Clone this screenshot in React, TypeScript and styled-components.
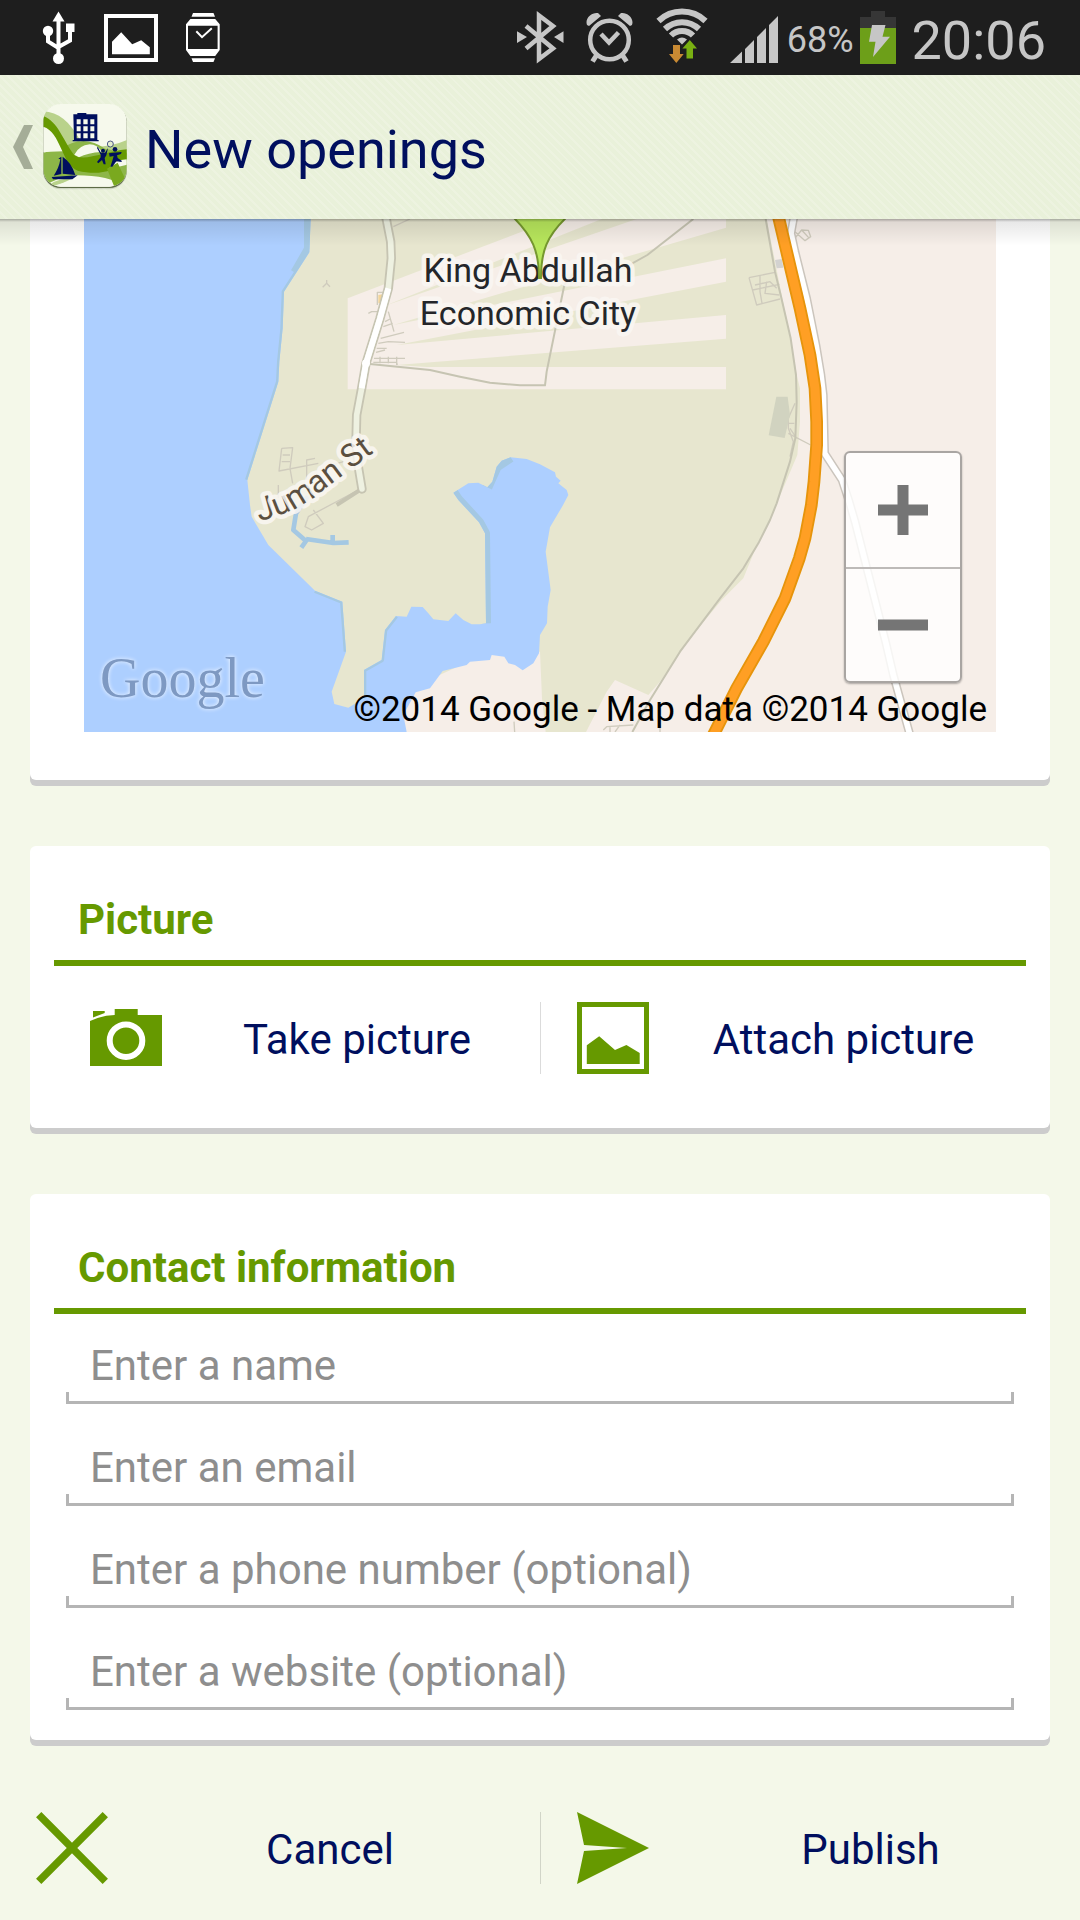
import React from "react";
import styled, { createGlobalStyle } from "styled-components";

const green = "#669900";
const navy = "#000f5e";
const paper = "#f4f8e9";
const statusGrey = "#c6c6c6";

const GlobalStyle = createGlobalStyle`
  *, *::before, *::after { box-sizing: border-box; }
  body {
    margin: 0;
    background: ${paper};
    font-family: Roboto, "Noto Sans", sans-serif;
    color: ${navy};
  }
  button, input { font: inherit; color: inherit; }
  svg { display: block; flex: none; }
`;

const Screen = styled.div`
  display: flex;
  flex-direction: column;
  min-height: 100vh;
`;

const StatusBar = styled.div`
  display: flex;
  justify-content: space-between;
  height: 75px;
  padding: 0 34px 0 42px;
  background: #1e1e1e;
  color: ${statusGrey};
`;

const StatusGroup = styled.div<{ $gap: number }>`
  display: flex;
  align-items: center;
  gap: ${(p) => p.$gap}px;
`;

const Percent = styled.span`
  padding: 4px 0 0 3px;
  font-size: 36px;
  line-height: 42px;
`;

const Clock = styled.time`
  padding: 6px 0 0 10px;
  font-size: 54px;
  line-height: 64px;
`;

const AppBar = styled.header`
  position: relative;
  z-index: 1;
  display: flex;
  align-items: center;
  height: 144px;
  padding: 0 12px;
  background: repeating-linear-gradient(45deg, #e9f1da 0 4px, #edf3e0 4px 6px);

  &::after {
    content: "";
    position: absolute;
    top: 100%;
    left: 0;
    right: 0;
    height: 27px;
    background: linear-gradient(rgba(0, 0, 0, 0.32), rgba(0, 0, 0, 0.09) 3px, rgba(0, 0, 0, 0));
    pointer-events: none;
  }
`;

const UpLink = styled.a`
  display: flex;
  align-items: center;
  gap: 8px;
`;

const PageTitle = styled.h1`
  margin: 0 0 0 17px;
  padding-top: 6px;
  font-size: 54px;
  font-weight: 400;
  line-height: 64px;
`;

const Form = styled.form`
  display: flex;
  flex-direction: column;
`;

const Card = styled.section`
  margin: 0 30px 66px;
  background: #fff;
  border-radius: 6px;
  box-shadow: 0 6px 0 #ccc;
`;

const MapCard = styled(Card)`
  padding: 0 54px 48px;
  border-radius: 0 0 6px 6px;
`;

const MapFrame = styled.div`
  position: relative;
  height: 513px;
  overflow: hidden;
`;

const MapCredit = styled.p`
  position: absolute;
  right: 9px;
  bottom: 0;
  margin: 0;
  color: #000;
  font-size: 35px;
  line-height: 44px;
  white-space: nowrap;
`;

const ZoomControls = styled.div`
  position: absolute;
  right: 34px;
  bottom: 49px;
  display: flex;
  flex-direction: column;
  width: 118px;
  background: rgba(255, 255, 255, 0.82);
  border: 2px solid #a9a5a2;
  border-radius: 6px;
  box-shadow: 0 1px 2px rgba(0, 0, 0, 0.3);
`;

const ZoomButton = styled.button`
  display: flex;
  align-items: center;
  justify-content: center;
  height: 114px;
  padding: 0;
  border: 0;
  background: none;

  & + & {
    border-top: 2px solid #bdbab8;
  }
`;

const CardTitle = styled.h2`
  margin: 0 24px;
  padding: 49px 24px 15px;
  border-bottom: 6px solid ${green};
  color: ${green};
  font-size: 42px;
  font-weight: 700;
  line-height: 50px;
`;

const ActionRow = styled.div`
  display: grid;
  grid-template-columns: 1fr 1fr;
`;

const CardActions = styled(ActionRow)`
  padding: 36px 24px 54px;
`;

const FooterActions = styled(ActionRow)`
  padding: 6px 0 36px;
`;

const Action = styled.button`
  display: flex;
  align-items: center;
  gap: 12px;
  height: 72px;
  padding: 0 0 0 36px;
  border: 0;
  background: none;

  & + & {
    border-left: 1px solid rgba(0, 0, 0, 0.14);
  }
`;

const ActionLabel = styled.span`
  flex: 1;
  padding-top: 4px;
  font-size: 42px;
  line-height: 50px;
  text-align: center;
`;

const Fields = styled.div`
  display: flex;
  flex-direction: column;
  gap: 12px;
  padding: 0 36px 30px;
`;

const Field = styled.input`
  width: 100%;
  height: 90px;
  padding: 12px 24px 0;
  border: 0;
  border-radius: 0;
  outline: 0;
  font-size: 42px;
  line-height: 50px;
  background:
    linear-gradient(#b5b5b5, #b5b5b5) left bottom / 3px 12px no-repeat,
    linear-gradient(#b5b5b5, #b5b5b5) right bottom / 3px 12px no-repeat,
    linear-gradient(#b5b5b5, #b5b5b5) left bottom / 100% 3px no-repeat;

  &::placeholder {
    color: #8e8e8e;
    opacity: 1;
  }
`;

const MapLabel = styled.text`
  fill: #24262a;
  stroke: rgba(250, 247, 243, 0.85);
  stroke-width: 9px;
  stroke-linejoin: round;
  paint-order: stroke;
  font-size: 34px;
  text-anchor: middle;
`;

const StreetLabel = styled(MapLabel)`
  fill: #5b4f40;
  font-size: 32px;
  text-anchor: start;
`;

const MapLogo = styled.text`
  fill: #7e99c2;
  font-family: "Liberation Serif", serif;
  font-size: 56px;
  filter: drop-shadow(0 0 2px rgba(255, 255, 255, 0.9));
`;

function UsbIcon() {
  return (
    <svg width="34" height="75" viewBox="42 0 34 75" fill="none" stroke="#fff" strokeWidth="4">
      <path d="M58.5 20V58M48 31V41.500L58.500 48M70 31V40.500L58.500 47" />
      <path d="M58.500 11.500L64.500 21.500H52.500Z" fill="#fff" stroke="none" />
      <circle cx="48" cy="31" r="5.200" fill="#fff" stroke="none" />
      <circle cx="58.500" cy="58.500" r="5.500" fill="#fff" stroke="none" />
      <path d="M66 23.500h8.500v8.500H66Z" fill="#fff" stroke="none" />
    </svg>
  );
}

function PhotoStatusIcon() {
  return (
    <svg width="54" height="75" viewBox="104 0 54 75" fill="#fff">
      <path d="M104 14h54v48h-54ZM108 18v40h46V18Z" fillRule="evenodd" />
      <path d="M112 41.700L121.200 32.300L132.200 44.300L141.200 40.300L149.800 47.300V54.300H112Z" />
    </svg>
  );
}

function WatchIcon() {
  return (
    <svg width="34" height="75" viewBox="186 0 34 75" fill="#fff">
      <path d="M193 13h20.500l1.500 3.700h-23.500Z" />
      <path
        fillRule="evenodd"
        d="M190.400 19H215.200L219.700 24.300V50L215.200 56H190.400L186 50V24.300ZM188 25.700V49H217.600V25.700Z"
      />
      <path d="M191.500 58.300h23.500l-1.500 3.700h-20.500Z" />
      <path d="M196.300 31.300L202 37.200L211.800 28.300" fill="none" stroke="#fff" strokeWidth="2" />
    </svg>
  );
}

function BluetoothIcon() {
  return (
    <svg width="47" height="75" viewBox="516 0 47 75" fill={statusGrey}>
      <path
        d="M525 26L552 48.500L538 59V15.500L552 26L525 48.500"
        fill="none"
        stroke={statusGrey}
        strokeWidth="4.500"
      />
      <path d="M516 31.300V43L526 37ZM562.500 31.300V43L553 37Z" />
    </svg>
  );
}

function AlarmIcon() {
  return (
    <svg width="48" height="75" viewBox="588 0 48 75" fill="none" stroke={statusGrey}>
      <circle cx="611.500" cy="40" r="19.300" strokeWidth="4.500" />
      <path d="M603 34L611 42.500L620.500 32.500" strokeWidth="4.500" />
      <path d="M599 54.500L594.500 61.500M624 54.500L628.500 61.500" strokeWidth="5" />
      <path
        d="M589 25C586.500 18 594 12 600 13L603 16L591 26ZM634 25C636.500 18 629 12 623 13L620 16L632 26Z"
        fill={statusGrey}
        stroke="none"
      />
    </svg>
  );
}

function WifiIcon() {
  return (
    <svg width="52" height="75" viewBox="656 0 52 75" fill="none" stroke={statusGrey} strokeWidth="6">
      <path d="M658.500 21A34 34 0 0 1 705.500 21" />
      <path d="M665 29A24.500 24.500 0 0 1 699 29" />
      <path d="M671 35.500A15.500 15.500 0 0 1 693 35.500" />
      <path d="M677 39.500Q682 35.500 687 39.500L682 44.500Z" fill={statusGrey} stroke="none" />
      <path d="M673 45h7v9h3.700L676.300 63L669 54h4Z" fill="#c98a33" stroke="none" />
      <path d="M686.500 58.500V48.500H682.400L689.800 40L697 48.500H693V58.500Z" fill="#79b012" stroke="none" />
    </svg>
  );
}

function SignalIcon() {
  return (
    <svg width="48" height="75" viewBox="730 0 48 75" fill={statusGrey}>
      <path d="M730 63L742 51.500V63ZM745 63V49L754 40V63ZM757 63V37L766 28V63ZM769 63V25L778 16V63Z" />
    </svg>
  );
}

function BatteryIcon() {
  return (
    <svg width="36" height="75" viewBox="860 0 36 75">
      <path d="M871 11h14v6h11v12h-36V17h11Z" fill="#363636" />
      <path d="M860 28h36v36h-36Z" fill="#6d9f19" />
      <path
        d="M872 25H885.500L882.500 36.700H890L873 57L875.500 41.700H869Z"
        fill={statusGrey}
      />
    </svg>
  );
}

function AppIcon() {
  return (
    <svg width="86" height="90" viewBox="101 8 258 270">
      <defs>
        <clipPath id="tile">
          <rect x="105" y="14" width="250" height="248" rx="52" />
        </clipPath>
      </defs>
      <rect x="104" y="18" width="252" height="252" rx="54" fill="#000" opacity="0.12" />
      <rect x="105" y="16" width="250" height="250" rx="52" fill="#5d6b46" />
      <g clipPath="url(#tile)">
        <path d="M105 14H356V264H105Z" fill="#f6f9ec" />
        <path d="M105 36C150 38 185 68 215 122L200 172C165 125 150 88 105 62Z" fill="#b9d28b" />
        <path d="M262 142Q310 142 356 122V175L268 168Z" fill="#b9d28b" />
        <path
          d="M105 160Q150 152 190 132Q240 112 290 148L356 160V262Q300 228 205 228Q150 232 105 262Z"
          fill="#8db648"
        />
        <path d="M105 84C138 88 158 118 166 156L105 158Z" fill="#f6f9ec" />
        <path
          d="M105 50C150 68 162 120 198 168C230 188 290 156 356 150V182C310 224 260 226 208 214C160 196 158 98 105 82Z"
          fill={green}
        />
        <path d="M198 166Q212 138 244 135Q268 136 280 158Q238 160 212 174Z" fill="#f6f9ec" />
        <path d="M320 188Q338 180 356 180V196L300 210Z" fill="#f6f9ec" />
        <path d="M296 208L328 190Q344 226 352 240L318 262Z" fill="#7aa91f" />
        <path d="M124 256Q150 236 196 236L130 266Z" fill="#b9d28b" />
        <path d="M128 262Q210 232 300 250L316 268H128Z" fill="#f6f9ec" />
      </g>
      <g fill={navy}>
        <path
          fillRule="evenodd"
          d="M195 45H207V41H234V45H267V122H271V126H193V122H197ZM205 60V75H217V60ZM225 60V75H238V60ZM246 60V75H258V60ZM205 81V96H217V81ZM225 81V96H238V81ZM246 81V96H258V81ZM205 102V117H217V102ZM225 102V117H238V102ZM246 102V117H258V102Z"
        />
        <path d="M159 172V224L136 229Q152 206 156 180L150 178ZM163 172Q190 190 201 227L163 223Z" />
        <path d="M130 233L208 228L192 240H134Z" />
        <circle cx="284" cy="154" r="6" />
        <path d="M268 142L278 160H290L299 146L294 168L289 176L292 195H286L281 182L270 192L266 188L277 174V166L266 146Z" />
        <circle cx="320" cy="150" r="7" />
        <path d="M302 162L314 160L340 158L338 164L326 168L328 176L340 184V188L324 186L312 202H306L312 184L316 170L304 172Z" />
      </g>
      <circle cx="306" cy="134" r="9" fill="#e4edcf" stroke={navy} strokeWidth="2" />
    </svg>
  );
}

function ChevronIcon() {
  return (
    <svg width="22" height="44" viewBox="0 0 22 44">
      <path d="M12 0H21L11 22L21 44H12L1 22Z" fill="#a5ad98" />
    </svg>
  );
}

function CameraIcon() {
  return (
    <svg width="72" height="72" viewBox="90 1002 72 72" fill={green}>
      <path d="M90 1021Q103 1015 114.700 1015V1009H137.700V1015H162V1066H90Z" />
      <path d="M93 1011H104.700V1013L93 1017.500Z" />
      <circle cx="126" cy="1040.700" r="16.300" stroke="#fff" strokeWidth="6" />
    </svg>
  );
}

function PictureIcon() {
  return (
    <svg width="72" height="72" viewBox="577 1002 72 72" fill={green}>
      <path d="M577 1002h72v72h-72ZM582 1007v62h62v-62Z" fillRule="evenodd" />
      <path d="M586.800 1045.300L599.200 1036.300L615 1050L626.400 1045L639.700 1053V1064H586.800Z" />
    </svg>
  );
}

function CrossIcon() {
  return (
    <svg width="72" height="72" viewBox="0 0 72 72" stroke={green} strokeWidth="7.500">
      <path d="M2.700 2.700L69.300 69.300M69.300 2.700L2.700 69.300" />
    </svg>
  );
}

function SendIcon() {
  return (
    <svg width="72" height="72" viewBox="0 0 72 72" fill={green}>
      <path d="M0 0L72 36L0 72L7 39L50 36L7 33Z" />
    </svg>
  );
}

function PlusIcon() {
  return (
    <svg width="50" height="50" viewBox="0 0 50 50">
      <path d="M19.500 0h11v19.500H50v11H30.500V50h-11V30.500H0v-11h19.500Z" fill="#757575" />
    </svg>
  );
}

function MinusIcon() {
  return (
    <svg width="50" height="50" viewBox="0 0 50 50">
      <path d="M0 19.500h50v11H0Z" fill="#757575" />
    </svg>
  );
}

const coast =
  "M72 12H752L748 112L672 230L668 340L658 440L655 500L562 795L570 870L575 905L625 990L765 1127L847 1160L858 1310L815 1430L823 1467L865 1478L912 1450V1365L965 1335L975 1245L1008 1203L1040 1205L1054 1175L1088 1176L1105 1195L1120 1213L1165 1218L1187 1195L1210 1215L1235 1228H1260L1278 1225L1275 955L1257 922L1195 855L1180 833L1225 805L1255 803L1282 817L1297 800L1310 755L1325 737L1352 727L1400 732L1440 748L1485 772L1488 785L1502 797L1495 805L1520 825L1525 840L1508 872L1470 937L1457 1010L1472 1125L1463 1175L1461 1225L1440 1260L1437 1315L1420 1345L1388 1366L1365 1350L1345 1345L1333 1325L1295 1320L1290 1335L1230 1340L1220 1350L1148 1368L1110 1420L1067 1432L1030 1500L1040 1551H72Z";
const westRoad =
  "M978 8L992 80L994 130L985 220L960 310L918 445L905 520L890 600L888 680L894 750L906 822";
const motorway =
  "M2155 4L2180 110L2220 280L2250 420L2265 520L2270 620L2270 690L2262 800L2254 870L2235 970L2218 1030L2175 1150L2110 1280L2030 1420L1960 1560";
const serviceRoad =
  "M2202 4L2193 55L2205 110L2240 250L2268 390L2283 480L2290 540L2294 715L2346 795L2366 855L2385 920L2478 1285L2500 1380L2550 1560";

function CityMap() {
  return (
    <svg
      width="100%"
      height="513"
      viewBox="84 219 912 513"
      preserveAspectRatio="xMidYMid slice"
      role="img"
      aria-label="Map of King Abdullah Economic City"
    >
      <defs>
        <clipPath id="sea">
          <path d={coast} />
        </clipPath>
        <path id="juman" d="M259 521Q294 513 317 495T380 448" />
      </defs>
      <g transform="translate(60 215) scale(0.333333)" fill="none" strokeLinejoin="round">
        <path d="M72 12H2808V1551H72Z" fill="#e7e6cf" />
        <path d="M863 250L1385 50L1480 12H1998V523H863Z" fill="#f6eee8" />
        <g fill="#e7e6cf">
          <path d="M975 272L1625 12H1730Z" />
          <path d="M1000 330L1998 38V130Z" />
          <path d="M1010 390L1998 200V300Z" />
          <path d="M1010 450L1998 371V456H1100Z" />
        </g>
        <path
          d="M2120 12L2165 240L2192 370L2210 480L2220 520V620L2212 720L2178 800L2130 912L2095 980L2050 1090L1985 1155L1890 1270L1800 1400L1765 1440L1665 1395L1640 1430L1578 1551H2808V12Z"
          fill="#f6eee8"
        />
        <path d="M1030 1551V1430L1290 1310L1440 1310L1446 1450L1457 1551Z" fill="#f6eee8" />
        <path d={coast} fill="#adcfff" />
        <g clipPath="url(#sea)" stroke="#a4c8e3">
          <path
            d="M748 12V112L672 230L668 340L658 440L655 500L562 795M765 1127L847 1160L858 1310M912 1450V1365L965 1335L975 1245L1008 1203"
            strokeWidth="14"
          />
          <path d="M1278 1225L1275 955L1257 922L1195 855L1180 833M1282 817L1310 755L1352 727" strokeWidth="30" />
          <path d="M740 12V100L700 170" strokeWidth="16" />
        </g>
        <path
          d="M760 820L708 895L700 945L738 978L724 998M738 972L820 984L866 982M818 980V960"
          stroke="#a4c8e3"
          strokeWidth="14"
        />
        <g stroke="#cfcbbd" strokeWidth="4">
          <path d="M800 195V205L788 217M800 205L810 215M952 270V232H970M925 295L935 290H960M985 290L1002 350M975 320L990 312M970 335L998 325M962 370L1032 352M955 385L985 380L1035 382M950 400H980M948 412L975 405M942 430H1035M940 442H1010L1012 450M960 425V445M985 425V445M1010 425V450" />
          <path d="M665 700L698 698L690 760M665 700L657 768L775 745M668 720H690M665 740H690M740 795V735L765 730M690 760L698 805M655 810V850M800 755L850 740M895 825L745 905L735 935L755 945L790 925L760 885M1000 35L1050 12" />
          <path d="M2067 188L2145 172M2067 188L2090 270L2160 252M2078 225L2158 208M2100 182V230L2106 265M2120 200L2115 235L2158 240M2085 210L2130 200L2150 220" />
          <path d="M2200 75L2225 45L2245 46L2252 65L2235 77L2205 50M2225 45L2248 70M2205 565L2185 610V640L2200 680L2190 725M2185 625H2203M2190 640L2210 670M2185 655L2252 690M1630 1545L1640 1535L1720 1530M1650 1535V1551M1680 1530L1665 1551M1800 1530V1551" />
          <path d="M1362 1520L1364 1551" />
        </g>
        <path d="M2149 545H2183L2190 600L2174 669L2126 661Z" fill="#d1d3c0" />
        <path d="M2145 135L2165 132L2170 158L2150 160Z" fill="#d3d2d0" />
        <path d="M955 240L968 238L965 265H955Z" fill="#f3d59a" />
        <path d="M725 830L760 805L790 815L750 850Z" fill="#cfe0c8" />
        <g stroke="#c6c4b2" strokeWidth="6">
          <path d="M930 447L1110 465L1200 485L1290 503L1380 511H1455L1460 470L1513 210L1545 170L1690 160L1762 120L1900 12" />
          <path d="M2117 12L2145 170L2162 240L2192 370L2208 480L2210 560L2206 670L2190 740L2150 865L2130 915L2095 985L2050 1060L1980 1150L1860 1310L1770 1455L1717 1551" />
          <path d="M830 870L900 825" strokeWidth="12" />
        </g>
        <path d={westRoad} stroke="#c6c4b2" strokeWidth="28" strokeLinecap="round" />
        <path d={westRoad} stroke="#eef1e1" strokeWidth="17" strokeLinecap="round" />
        <path d="M985 220L960 310L918 445L905 520" stroke="#fff" strokeWidth="18" />
        <circle cx="918" cy="445" r="12" fill="#fff" />
        <path d={serviceRoad} stroke="#cbc5bd" strokeWidth="26" />
        <path d={serviceRoad} stroke="#fff" strokeWidth="17" />
        <path d={motorway} stroke="#e6940c" strokeWidth="38" />
        <path d={motorway} stroke="#ff9f24" strokeWidth="27" />
      </g>
      <MapLabel x="528" y="282">King Abdullah</MapLabel>
      <MapLabel x="528" y="325">Economic City</MapLabel>
      <StreetLabel>
        <textPath href="#juman">Juman St</textPath>
      </StreetLabel>
      <MapLogo x="100" y="697">Google</MapLogo>
      <path
        d="M511 215C533 236 539 252 539 278H541C541 252 546 236 569 215Z"
        fill="#b8e75c"
        stroke="#76982f"
        strokeWidth="2"
      />
    </svg>
  );
}

const contactFields = [
  { name: "name", type: "text", hint: "Enter a name" },
  { name: "email", type: "email", hint: "Enter an email" },
  { name: "phone", type: "tel", hint: "Enter a phone number (optional)" },
  { name: "website", type: "url", hint: "Enter a website (optional)" },
];

export default function App() {
  return (
    <Screen>
      <GlobalStyle />
      <StatusBar>
        <StatusGroup $gap={28}>
          <UsbIcon />
          <PhotoStatusIcon />
          <WatchIcon />
        </StatusGroup>
        <StatusGroup $gap={6}>
          <StatusGroup $gap={22}>
            <BluetoothIcon />
            <AlarmIcon />
            <WifiIcon />
            <SignalIcon />
          </StatusGroup>
          <Percent>68%</Percent>
          <BatteryIcon />
          <Clock>20:06</Clock>
        </StatusGroup>
      </StatusBar>

      <AppBar>
        <UpLink href="#" aria-label="Navigate up">
          <ChevronIcon />
          <AppIcon />
        </UpLink>
        <PageTitle>New openings</PageTitle>
      </AppBar>

      <Form onSubmit={(event: React.FormEvent) => event.preventDefault()}>
        <MapCard>
          <MapFrame>
            <CityMap />
            <ZoomControls>
              <ZoomButton type="button" aria-label="Zoom in">
                <PlusIcon />
              </ZoomButton>
              <ZoomButton type="button" aria-label="Zoom out">
                <MinusIcon />
              </ZoomButton>
            </ZoomControls>
            <MapCredit>©2014 Google - Map data ©2014 Google</MapCredit>
          </MapFrame>
        </MapCard>

        <Card>
          <CardTitle>Picture</CardTitle>
          <CardActions>
            <Action type="button">
              <CameraIcon />
              <ActionLabel>Take picture</ActionLabel>
            </Action>
            <Action type="button">
              <PictureIcon />
              <ActionLabel>Attach picture</ActionLabel>
            </Action>
          </CardActions>
        </Card>

        <Card>
          <CardTitle>Contact information</CardTitle>
          <Fields>
            {contactFields.map((field) => (
              <Field
                key={field.name}
                name={field.name}
                type={field.type}
                placeholder={field.hint}
                aria-label={field.hint}
              />
            ))}
          </Fields>
        </Card>

        <FooterActions>
          <Action type="button">
            <CrossIcon />
            <ActionLabel>Cancel</ActionLabel>
          </Action>
          <Action type="submit">
            <SendIcon />
            <ActionLabel>Publish</ActionLabel>
          </Action>
        </FooterActions>
      </Form>
    </Screen>
  );
}
